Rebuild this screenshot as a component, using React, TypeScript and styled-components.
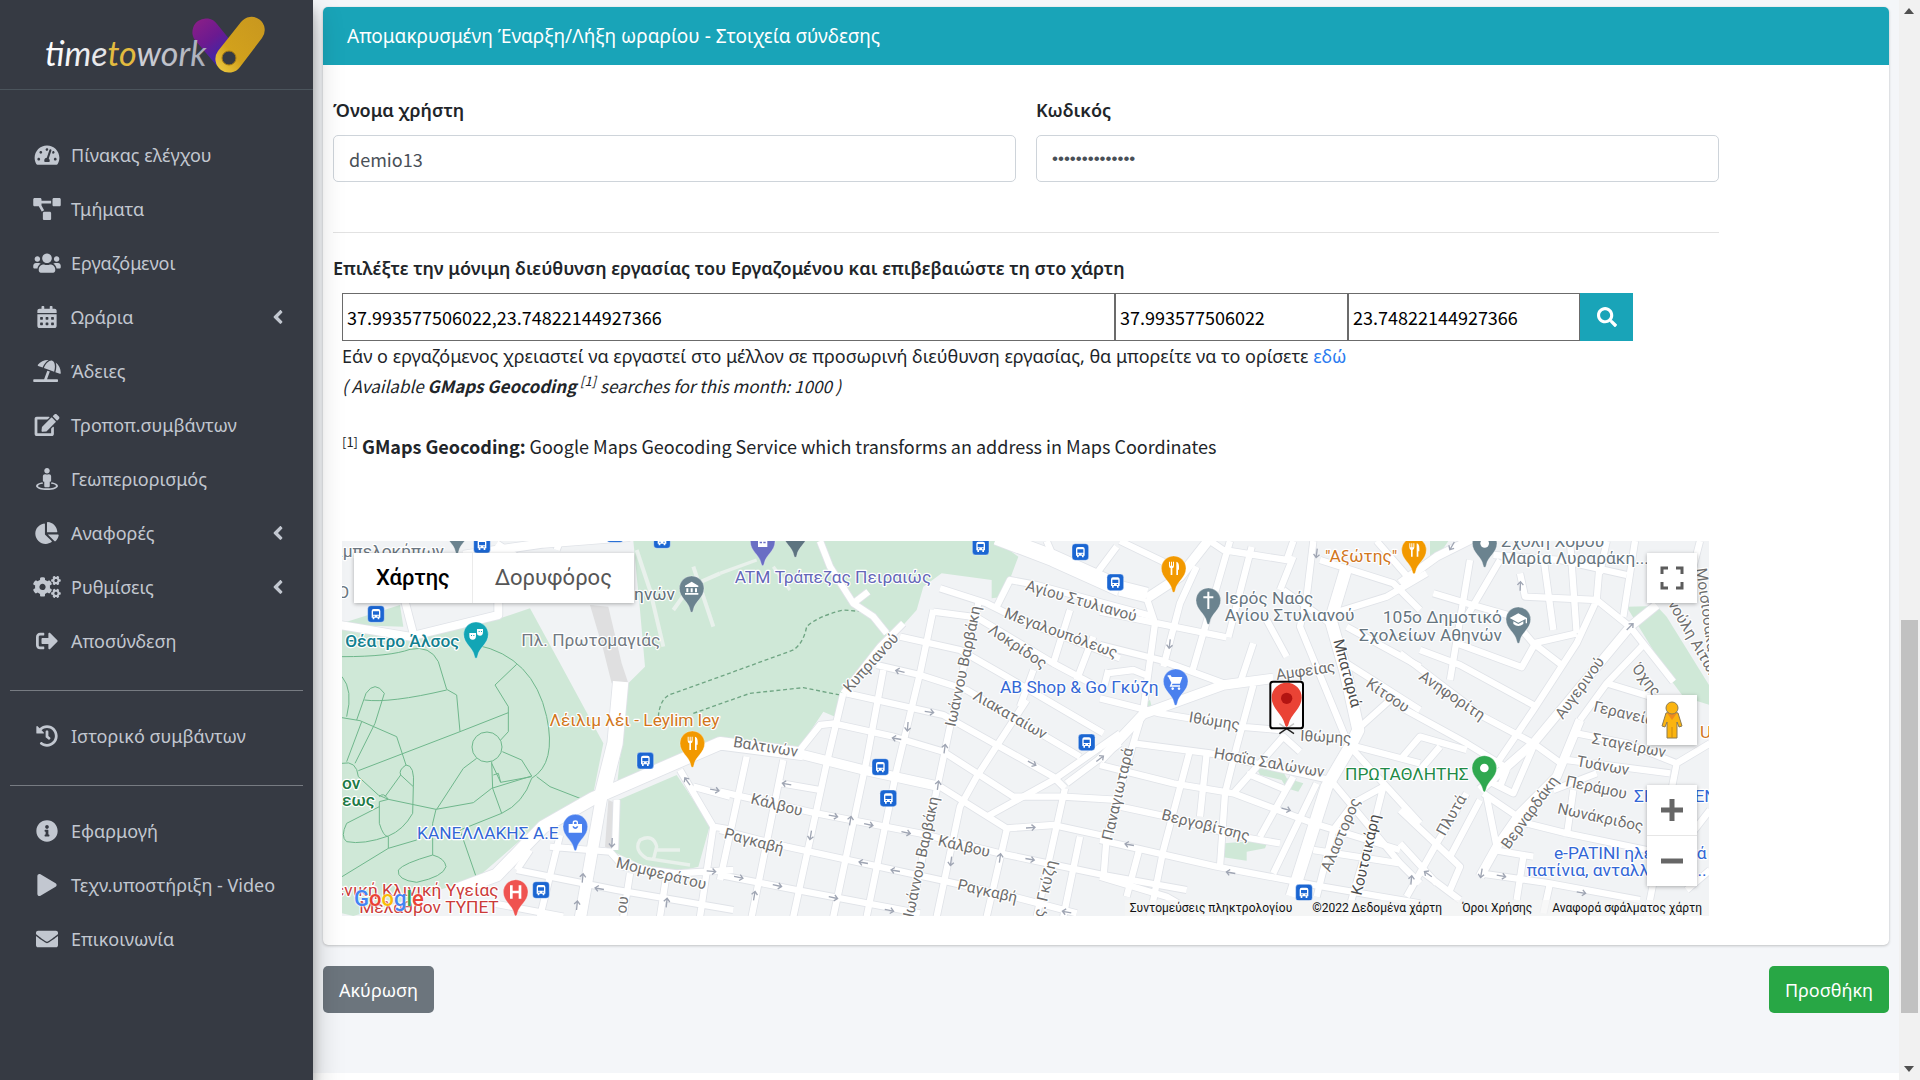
import React from 'react';
import styled, { createGlobalStyle, css } from 'styled-components';
import {
  FaTachometerAlt, FaProjectDiagram, FaUsers, FaCalendarAlt, FaUmbrellaBeach, FaEdit, FaStreetView,
  FaChartPie, FaCogs, FaSignOutAlt, FaHistory, FaInfoCircle, FaPlay, FaEnvelope, FaAngleLeft, FaSearch,
} from 'react-icons/fa';

const greek = '"Noto Sans", "Open Sans", sans-serif';
const latin = '"Noto Sans CJK JP", "Noto Sans", sans-serif';
const mapFont = 'Roboto, "Noto Sans", sans-serif';

const GlobalStyle = createGlobalStyle`
  *, *::before, *::after { box-sizing: border-box; }
  body { margin: 0; background: #fff; color: #212529; font: 18px/30px ${greek}; }
  a { color: #2a7bf0; text-decoration: none; }
  button, input { font: inherit; }
`;

/* ---------- page shell ---------- */
const Page = styled.div`
  display: flex;
  min-height: 100vh;
`;
const Sidebar = styled.aside`
  flex: 0 0 313px;
  background: #363a43;
  color: #c2c7d0;
  box-shadow: 0 14px 28px rgba(0, 0, 0, 0.25), 0 10px 10px rgba(0, 0, 0, 0.22);
  z-index: 2;
`;
const Brand = styled.a`
  display: block;
  height: 90px;
  border-bottom: 1px solid #4b545c;
  svg { display: block; }
`;
const Nav = styled.nav`
  padding: 40px 10px 0;
`;
const NavList = styled.ul`
  list-style: none;
  margin: 0;
  padding: 0;
  display: flex;
  flex-direction: column;
  gap: 4px;
`;
const Divider = styled.hr`
  height: 1px;
  margin: 24px 0 20px;
  border: 0;
  background: #777b82;
`;
const NavLink = styled.a`
  display: flex;
  align-items: center;
  gap: 8px;
  height: 50px;
  padding: 0 14px 0 21px;
  color: #c2c7d0;
`;
const NavIcon = styled.span`
  flex: 0 0 32px;
  display: flex;
  justify-content: center;
  svg { width: 28px; height: 22px; }
`;
const NavText = styled.span`
  flex: 1;
  white-space: nowrap;
`;
const Main = styled.main`
  flex: 1;
  min-width: 0;
  display: flex;
  flex-direction: column;
`;
const Content = styled.div`
  flex: 1;
  padding: 7px 10px 0;
  background: #f4f6f9;
`;
const Footer = styled.footer`
  height: 7px;
  background: #fff;
`;

/* ---------- scrollbar column ---------- */
const ScrollTrack = styled.div`
  flex: 0 0 21px;
  display: flex;
  flex-direction: column;
  align-items: center;
  background: #f1f1f1;
`;
const ScrollArrow = styled.svg`
  flex: 0 0 21px;
  width: 21px;
  fill: #505050;
`;
const ScrollThumb = styled.div`
  flex: 393;
  width: 17px;
  background: #c1c1c1;
`;
const ScrollGap = styled.div<{ $grow: number }>`
  flex: ${p => p.$grow};
`;

/* ---------- card and form ---------- */
const Card = styled.section`
  background: #fff;
  border-radius: 5px;
  box-shadow: 0 0 1px rgba(0, 0, 0, 0.13), 0 1px 3px rgba(0, 0, 0, 0.2);
`;
const CardHeader = styled.h3`
  margin: 0;
  padding: 14px 24px;
  border-radius: 5px 5px 0 0;
  background: #19a4b8;
  color: #fff;
  font-size: 19px;
  font-weight: 400;
  line-height: 30px;
`;
const CardBody = styled.form`
  padding: 30px 170px 29px 10px;
`;
const FieldRow = styled.div`
  display: grid;
  grid-template-columns: 1fr 1fr;
  gap: 20px;
`;
const Field = styled.div`
  display: flex;
  flex-direction: column;
  gap: 10px;
`;
const Label = styled.label`
  font-weight: 600;
  color: #212529;
`;
const TextInput = styled.input`
  height: 47px;
  padding: 0 15px;
  border: 1px solid #ced4da;
  border-radius: 5px;
  color: #495057;
  font-family: ${latin};
  &[type='password'] { font-family: 'Liberation Sans', sans-serif; font-size: 17px; }
`;
const Rule = styled.hr`
  height: 1px;
  margin: 50px 0 20px;
  border: 0;
  background: #e2e2e2;
`;
const Address = styled.div`
  padding: 10px 10px 0 9px;
`;
const SearchGroup = styled.div`
  display: grid;
  grid-template-columns: 773fr 233fr 232fr 53px;
  height: 48px;
  margin-right: 76px;
`;
const CoordInput = styled.input`
  min-width: 0;
  padding: 0 4px;
  border: 1px solid #6b6b6b;
  border-radius: 0;
  background: #fff;
  color: #000;
  font-family: ${latin};
`;
const SearchButton = styled.button`
  display: flex;
  align-items: center;
  justify-content: center;
  border: 0;
  background: #19a4b8;
  color: #fff;
  font-size: 20px;
`;
const Hint = styled.p<{ $gap?: boolean; $latin?: boolean; $italic?: boolean }>`
  margin: 0;
  ${p => p.$gap && css`margin-top: 30px;`}
  ${p => p.$latin && css`font-family: ${latin};`}
  ${p => p.$italic && css`font-size: 17px; font-style: italic;`}
  sup { font-size: 13px; line-height: 0; }
`;
const Actions = styled.div`
  display: flex;
  justify-content: space-between;
  margin-top: 21px;
`;
const ActionButton = styled.button<{ $color: string }>`
  height: 47px;
  padding: 0 16px;
  border: 0;
  border-radius: 5px;
  background: ${p => p.$color};
  color: #fff;
`;

/* ---------- map ---------- */
const MapBox = styled.div`
  position: relative;
  height: 375px;
  margin-top: 80px;
  overflow: hidden;
  background: #f1f3f4;
  font-family: ${mapFont};
`;
const MapCanvas = styled.svg`
  display: block;
  width: 100%;
  height: 100%;
  font-family: ${mapFont};
`;
const MapTypes = styled.div`
  position: absolute;
  top: 12px;
  left: 12px;
  display: flex;
  gap: 1px;
  background: #ebebeb;
  box-shadow: 0 1px 4px rgba(0, 0, 0, 0.3);
`;
const MapType = styled.button<{ $active?: boolean }>`
  height: 50px;
  padding: 0 22px;
  border: 0;
  background: #fff;
  color: ${p => (p.$active ? '#000' : '#565656')};
  font-size: 22px;
  font-weight: ${p => (p.$active ? 500 : 400)};
`;
const MapTools = styled.div`
  position: absolute;
  top: 12px;
  right: 12px;
  bottom: 30px;
  width: 50px;
  display: flex;
  flex-direction: column;
`;
const ToolGroup = styled.div<{ $top?: number }>`
  margin-top: ${p => p.$top ?? 0}px;
  display: flex;
  flex-direction: column;
  gap: 1px;
  background: #e6e6e6;
  box-shadow: 0 1px 4px rgba(0, 0, 0, 0.3);
`;
const Tool = styled.button`
  height: 50px;
  display: flex;
  align-items: center;
  justify-content: center;
  padding: 0;
  border: 0;
  background: #fff;
`;
const Attribution = styled.div`
  position: absolute;
  right: 0;
  bottom: 0;
  display: flex;
  gap: 20px;
  padding: 0 7px 0 5px;
  background: rgba(245, 245, 245, 0.7);
  font-size: 12px;
  line-height: 16px;
  white-space: nowrap;
  a, span { color: #111; }
`;
const GoogleMark = styled.a`
  position: absolute;
  left: 12px;
  bottom: 4px;
  font: 500 22px/26px ${mapFont};
  text-shadow: 0 0 2px #fff, 0 0 2px #fff;
`;
const Tint = styled.span<{ $c: string }>`
  color: ${p => p.$c};
`;
const Halo = styled.text`
  paint-order: stroke;
  stroke: #fff;
  stroke-width: 7px;
  stroke-linejoin: round;
`;

type Pt = [number, number];

/* The map is drawn in tiles; each tile lists its own parks, streets and labels. */
const A = 0, B = 1170, C = 2310, D = 3210;

const parks: [number, string][] = [
  [A, 'M36 285 L240 325 L520 262 L600 235 L690 400 L820 640 L790 790 L640 870 L440 1045 L200 1120 L70 1158 L36 1150Z'],
  [A, 'M36 280 L210 225 L220 290 L60 285Z'],
  [A, 'M910 33 H1300 V660 L1200 630 L1170 630 L860 775 L895 460 L945 410 L930 240Z'],
  [A, 'M865 810 L1040 735 L1140 885 L1105 1010 L1000 1035 L850 965Z'],
  [B, 'M0 33 H830 L895 80 L850 200 L815 205 L815 150 L665 130 L610 170 L590 240 L545 290 L480 350 L370 490 L345 560 L310 545 L240 650 L0 620Z'],
  [C, 'M470 715 L550 725 L560 745 L610 760 L595 785 L560 775 L545 750 L480 735Z'],
  [C, 'M372 940 L505 930 L495 955 L440 965 L440 992 L370 982Z'],
  [C, 'M115 530 L150 510 L155 530 L120 548Z'],
  [D, 'M680 230 L770 228 L800 260 L930 470 L930 525 L850 500 L820 460Z'],
  [D, 'M90 33 L145 33 L120 70 L90 90Z'],
];

const major: [number, number, string][] = [
  [A, 46, 'M872 455 L855 640 L815 800'],
  [A, 34, 'M815 800 L750 1170'],
  [A, 38, 'M380 1080 L500 1035 L640 890 L790 805 L1170 640 L1420 672'],
  [A, 24, 'M30 285 L240 320 L505 255 L505 215'],
  [A, 26, 'M400 75 L640 40 L900 20'],
  [A, 22, 'M225 215 L250 310'],
  [B, 48, 'M830 20 L1000 85 L1200 175'],
  [B, 28, 'M0 640 L240 672 L440 722 L660 770'],
  [C, 44, 'M60 175 L140 195'],
  [C, 28, 'M0 690 L130 552 L370 465 L520 445'],
  [C, 28, 'M140 205 L240 140 L330 25'],
  [C, 36, 'M740 110 L692 270 L735 420 L775 600 L750 650 L680 770 L575 1100'],
  [D, 26, 'M240 780 L400 640 L690 290 L770 225'],
  [D, 26, 'M240 1040 L290 950 L360 850 L470 740 L540 570'],
  [D, 24, 'M0 160 L110 80 L230 20'],
];

const streets: [number, string][] = [
  [A, 'M560 1020 L860 1080 L1210 1140 M690 915 L630 1160 M660 950 L840 965 L880 1010 L1040 1030 L1210 1020 M860 810 L855 960 M1050 720 L1150 890 L1110 1160 M1090 770 L1200 800 M1150 890 L1210 900 M600 960 L560 1020 M900 1030 L880 1160 M1010 1030 L990 1160 M490 1120 L700 1160 M500 40 L560 80 M690 33 L680 60'],
  [B, 'M0 785 L290 850 L600 910 L840 970 L1150 1035 L1400 1080 M0 900 L200 950 L660 1050 L880 1100 L1070 1150 M0 1035 L230 1080 L600 1150'],
  [B, 'M340 580 L520 620 L670 665 L880 800 L1030 800 M380 490 L670 555 L1000 740 L1035 775 M470 405 L600 435 L740 480 L1080 680 M540 320 L720 360 L860 440 L1150 610 M660 175 L800 220 L900 270 L1200 385'],
  [B, 'M185 760 L300 780 M80 680 L0 1050 M190 690 L95 1160 M370 490 L320 700 L220 1160 M490 420 L440 690 L340 1160 M640 240 L600 430 L530 720 L440 1160 M775 220 L690 590 L650 780 L570 1160 M920 510 L770 740 L720 830 L650 1160 M860 900 L800 1160 M1035 775 L985 1000 L950 1160 M1080 920 L1030 1160'],
  [B, 'M550 280 L480 350 L370 490 M240 660 L300 585 L345 580 M640 245 L770 262 L1000 400 L1150 480 M660 770 L860 895 L1000 885 L1160 920 M800 860 L1000 750 L1200 610 M1040 760 L1200 640 M830 230 L870 150 L950 165 L1300 260 M1190 50 L1130 130 M1120 320 L1070 450 M1165 420 L1150 480 M980 33 L1000 80 M940 420 L900 530 M1030 800 L1200 810 M1050 240 L1000 400 M900 800 L880 810'],
  [B, 'M300 33 L330 110 L400 220 L460 260 L500 310 M400 220 L445 185'],
  [C, 'M60 33 L200 100 L260 130 M140 205 L165 280 L130 540 L100 640 L20 920 L10 1050 M0 245 L380 322 M290 110 L240 220 L190 410 M390 33 L275 430 M455 50 L385 322 M330 33 L370 60 L560 90 L580 33 M0 345 L180 390 L370 460 M20 430 L100 420 L150 440'],
  [C, 'M0 505 L180 550 L420 590 L540 600 M100 640 L330 670 L690 750 M0 705 L220 760 L400 790 L640 880 L900 960 M0 930 L350 1010 L640 1065 L960 1120 M0 1040 L200 1100 L300 1158 M460 465 L410 650 L375 790 L360 1010 M270 660 L190 960 L150 1160 M320 670 L300 860 M400 790 L550 620 L600 665 M580 740 L480 920 M650 760 L520 1030 M440 730 L560 780'],
  [C, 'M640 33 L620 200 L600 290 L740 630 M500 270 L560 380 M460 340 L420 460 M580 80 L540 180 M660 90 L880 160 L960 240 M750 645 L960 700 M770 600 L870 510 M740 400 L960 540 M740 290 L960 410 M700 250 L860 200 L980 130 M850 770 L830 850 L740 1160 M850 770 L760 820 L700 900 L650 1100 M750 650 L960 880 M700 760 L900 1000 M640 960 L900 1000 L960 1060 M550 180 L690 280 M830 33 L940 160 M60 830 L200 860 L420 920 L540 940 M120 950 L80 1100'],
  [D, 'M0 530 L200 640 L330 720 M0 370 L250 560 L400 640 L490 705 M0 690 L60 620 L200 660 M170 340 L365 412 L400 350 M60 360 L180 405 L400 525 M210 90 L150 450 M100 190 L200 220 L340 260 M300 90 L200 260 M340 270 L400 340 L485 405 M400 340 L530 310 M360 130 L375 200 L590 210 L690 290 L820 455 M280 75 L480 90 L680 135 M600 90 L590 210 L530 340 L400 540 L250 760'],
  [D, 'M430 80 L460 300 M510 33 L530 310 M705 33 L670 260 M620 33 L600 130 M730 345 L620 460 L540 570 M620 460 L850 530 M530 610 L680 640 L830 700 L930 640 M500 690 L810 730 M460 780 L590 730 M520 780 L500 920 M830 700 L740 1160 M380 880 L500 910 L740 960 M280 960 L400 980 M240 1030 L450 1060 L720 1110 M370 980 L350 1110 M740 990 L860 930 L930 840 M860 1080 L930 1020 M900 33 L880 110 M290 950 L260 800'],
  [D, 'M200 790 L110 940 L20 1100 M250 790 L390 885 M240 810 L150 980 L180 1010 L150 1080 M0 840 L170 1000 M60 1020 L180 1110 M0 940 L110 1060 M400 650 L340 790 L240 740 M320 720 L300 770 M450 1060 L430 1150 M120 650 L60 720'],
];

const trails = 'M36 380 Q180 380 240 358 Q300 345 325 395 L350 478 L380 495 L390 605 L85 722 M36 563 L90 572 L200 620 L228 705 M103 510 Q180 520 350 480 M36 440 Q70 480 50 560 M80 570 L108 490 Q135 450 163 490 L135 580 L75 700 M95 575 L50 695 M36 700 Q80 690 85 740 L145 795 L175 808 L318 838 L430 818 L485 775 L605 738 L575 690 L517 665 M320 838 L400 715 L440 685 M485 695 L488 775 L515 850 M485 700 L512 757 L605 740 M490 735 L505 730 L512 757 M440 345 Q610 380 650 560 Q680 700 605 745 Q580 820 515 850 L390 900 L440 1045 M560 403 L495 465 L535 530 L535 605 L512 630 M390 605 L535 548 M620 740 L660 770 L750 805 M148 800 Q160 785 175 808 L148 815 L148 880 Q160 920 175 920 L175 955 L36 1040 M228 705 Q255 705 250 770 L248 850 Q220 900 175 918 Q100 945 50 935 Q30 920 50 880 L148 830 M228 705 Q205 720 212 735 L250 770 M212 735 L165 800 M318 838 L308 880 L308 975 Q345 985 348 1010 Q340 1040 260 1057 Q200 1050 205 1020 Q220 1000 308 975 M175 955 L260 930';

interface StreetName { t: string; p: Pt; r?: number; dark?: boolean }
const names: StreetName[] = [
  { t: 'Μομφεράτου', p: [A + 856, 1012], r: 14 },
  { t: 'ου', p: [A + 888, 1152], r: -82 },
  { t: 'Βαλτινών', p: [B + 38, 650], r: 9 },
  { t: 'Κάλβου', p: [B + 90, 820], r: 14 },
  { t: 'Ραγκαβή', p: [B + 10, 924], r: 15 },
  { t: 'Κάλβου', p: [B + 652, 946], r: 13 },
  { t: 'Ραγκαβή', p: [B + 710, 1078], r: 13 },
  { t: 'Κυπριανού', p: [B + 390, 490], r: -48 },
  { t: 'Ιωάννου Βαρβάκη', p: [B + 706, 592], r: -78 },
  { t: 'Ιωάννου Βαρβάκη', p: [B + 580, 1164], r: -78 },
  { t: 'Αγίου Στυλιανού', p: [B + 914, 180], r: 16 },
  { t: 'Μεγαλουπόλεως', p: [B + 850, 262], r: 20 },
  { t: 'Λοκρίδος', p: [B + 802, 306], r: 34 },
  { t: 'Λιακαταίων', p: [B + 756, 506], r: 30 },
  { t: 'ς. Γκύζη', p: [B + 970, 1164], r: -77 },
  { t: 'Παναγιωταρά', p: [C + 36, 934], r: -77 },
  { t: 'Ιθώμης', p: [C + 265, 576], r: 9 },
  { t: 'Ιθώμης', p: [C + 600, 632], r: 3 },
  { t: 'Αμφείας', p: [C + 530, 450], r: -8 },
  { t: 'Ησαΐα Σαλώνων', p: [C + 340, 684], r: 10 },
  { t: 'Βεργοβίτσης', p: [C + 182, 868], r: 14 },
  { t: 'Μπαταριά', p: [C + 700, 332], r: 75, dark: true },
  { t: 'Κίτσου', p: [C + 795, 468], r: 34 },
  { t: 'Αλαστορος', p: [C + 690, 1028], r: -67 },
  { t: 'Κουτσικάρη', p: [C + 784, 1098], r: -77, dark: true },
  { t: 'Ανηφορίτη', p: [D + 54, 446], r: 34 },
  { t: 'Αυγερινού', p: [D + 488, 570], r: -54 },
  { t: 'Βερναρδάκη', p: [D + 326, 960], r: -54 },
  { t: 'Πλυτά', p: [D + 134, 920], r: -60 },
  { t: 'Γερανείων', p: [D + 578, 544], r: 13 },
  { t: 'Σταγείρων', p: [D + 574, 640], r: 11 },
  { t: 'Τυάνων', p: [D + 528, 708], r: 10 },
  { t: 'Περάμου', p: [D + 494, 768], r: 12 },
  { t: 'Νωνάκριδος', p: [D + 470, 850], r: 12 },
  { t: 'Όχης', p: [D + 694, 416], r: 52 },
  { t: 'Γιαννούλη Αιτωλού', p: [D + 762, 150], r: 60 },
  { t: 'Μοισιόδακα', p: [D + 888, 116], r: 82 },
];

interface Place { t: string[]; p: Pt; c: string; end?: boolean; bold?: boolean }
const places: Place[] = [
  { t: ['Αμπελοκήπων'], p: [A + 4, 80], c: '#6b7680' },
  { t: ['Ο'], p: [A + 22, 205], c: '#6b7680' },
  { t: ['Πεδίον Αθηνών'], p: [A + 1035, 210], c: '#5f6f78', end: true },
  { t: ['Θέατρο Άλσος'], p: [A + 388, 350], c: '#12808f', end: true, bold: true },
  { t: ['Πλ. Πρωτομαγιάς'], p: [A + 574, 348], c: '#727a82' },
  { t: ['Λέιλιμ λέι - Leylim ley'], p: [A + 1168, 588], c: '#d1761c', end: true },
  { t: ['ΚΑΝΕΛΛΑΚΗΣ Α.Ε'], p: [A + 686, 928], c: '#3367d6', end: true },
  { t: ['ον', 'εως'], p: [A + 36, 776], c: '#1d7a46', bold: true },
  { t: ['Γενική Κλινική Υγείας', 'Μέλαθρον ΤΥΠΕΤ'], p: [A + 506, 1098], c: '#cb3a38', end: true },
  { t: ['ATM Τράπεζας Πειραιώς'], p: [B + 44, 160], c: '#6467b8' },
  { t: ['AB Shop & Go Γκύζη'], p: [C + 176, 488], c: '#3367d6', end: true },
  { t: ['Ιερός Ναός', 'Αγίου Στυλιανού'], p: [C + 374, 222], c: '#66757f' },
  { t: ['"Αξώτης"'], p: [C + 892, 96], c: '#d1761c', end: true },
  { t: ['105ο Δημοτικό', 'Σχολείων Αθηνών'], p: [D + 306, 280], c: '#66757f', end: true },
  { t: ['Σχολή Χορού', 'Μαρία Λυραράκη...'], p: [D + 304, 50], c: '#66757f' },
  { t: ['ΠΡΩΤΑΘΛΗΤΗΣ'], p: [D + 206, 750], c: '#218a47', end: true },
  { t: ['e-PATINI ηλεκτρικά', 'πατίνια, ανταλλακτικ...'], p: [D + 920, 986], c: '#3367d6', end: true },
  { t: ['ΣΕΡΒΙΣ ΕΝ'], p: [D + 702, 815], c: '#3367d6' },
  { t: ['U'], p: [D + 900, 624], c: '#d1761c' },
];

const stops: Pt[] = [
  [A + 138, 252], [A + 456, 44], [A + 855, 12], [A + 996, 30], [A + 946, 692], [A + 633, 1080],
  [B + 782, 50], [B + 1081, 66], [B + 1186, 157], [B + 1100, 637], [B + 481, 711], [B + 505, 805],
  [C + 612, 1088],
];

const arrows: [number, number, number][] = [
  [B + 540, 424, 193], [B + 628, 546, 8], [B + 563, 590, 95], [B + 530, 626, 190], [B + 936, 700, 28],
  [B + 674, 656, -82], [B + 654, 766, -82], [B + 200, 762, 190], [B + 340, 858, 10], [B + 446, 884, 12],
  [B + 391, 872, -80], [B + 558, 908, 12], [B + 272, 916, 100], [B + 932, 893, -4], [B + 930, 988, 10],
  [B + 840, 984, -82], [B + 693, 994, 98], [B + 430, 998, 190], [B + 526, 1022, 190], [B + 56, 1042, 12],
  [B + 172, 1067, 12], [B + 340, 1103, 12], [B + 508, 1141, 12], [B + 103, 1097, -80], [B + 1040, 1146, 190],
  [B + 1140, 686, -38], [A + 1072, 754, 235], [A + 1154, 780, 10], [A + 846, 938, 93], [A + 808, 1076, 190],
  [A + 1010, 1118, -84], [A + 758, 1044, -84], [A + 741, 1126, -84], [A + 1144, 1024, 5],
  [C + 209, 342, 97], [C + 650, 70, 97], [C + 88, 944, 190], [C + 392, 1028, 190], [C + 558, 838, 15],
  [C + 934, 1050, -84], [D + 361, 168, -88], [D + 690, 290, -45], [D + 156, 48, 120], [D + 244, 1030, 100],
  [D + 304, 1038, 10], [D + 544, 1088, 10], [D + 84, 1032, 215],
];

const glyphs: Record<string, React.ReactNode> = {
  fork: <path d="M-14-20v12q0 7 5 8v20h5v-20q5-1 5-8v-12h-3v12h-3v-12h-3v12h-3v-12zM8 20v-40q8 2 8 14v10h-3v16z" fill="#fff" />,
  museum: <path d="M-20-8L0-20 20-8v4h-40zM-16 0h6v12h-6zm13 0h6v12h-6zm13 0h6v12h-6zM-20 14h40v5h-40z" fill="#fff" />,
  masks: <path d="M-20-4h20v8q0 12-10 12t-10-12zM3-16h18v8q0 12-9 12t-9-8zM-15 2h3v3h-3zm7 0h3v3h-3zM8-10h3v3H8zm7 0h3v3h-3z" fill="#fff" fillRule="evenodd" />,
  bag: <path d="M-20-8h40v26h-40zM-8-8v-4q0-7 8-7t8 7v4h-4v-4q0-3-4-3t-4 3v4zM-9 0q9 14 18 0l-4-2q-5 8-10 0z" fill="#fff" fillRule="evenodd" />,
  hospital: <path d="M-17-20h8v16H9v-16h8v40H9V4H-9v16h-8z" fill="#fff" />,
  bank: <path d="M-14-16h28v32h-28zM-9-10v5h7v-5zm11 0v5h7v-5zM-9 0v5h7V0zM2 0v5h7V0z" fill="#fff" fillRule="evenodd" />,
  cart: <path d="M-24-18h9l3 5h32l-7 20h-22l-3 5h25v4h-31l5-12-9-18h-2zM-9 18a4 4 0 1 0 .1 0zM10 18a4 4 0 1 0 .1 0z" fill="#fff" />,
  cross: <path d="M-3-26h6v14h12v6H3v32h-6V-6h-12v-6h12z" fill="#fff" />,
  school: <path d="M-26-4L0-18 26-4v16h-4V-1L0 10zM-15 6L0 14 15 6v8Q0 26-15 14z" fill="#fff" />,
  dot: <circle r="13" fill="#fff" />,
};
const pins: [number, number, string, string][] = [
  [A + 1085, 175, '#6b838f', 'museum'], [A + 438, 313, '#12a5b5', 'masks'], [A + 1087, 640, '#f29900', 'fork'],
  [A + 736, 890, '#4a80ee', 'bag'], [A + 557, 1086, '#ef5350', 'hospital'], [A + 381, 0, '#6b838f', 'dot'],
  [B + 128, 35, '#6a6ec4', 'bank'], [B + 226, 10, '#5d7480', 'dot'], [C + 221, 115, '#f29900', 'fork'],
  [C + 325, 211, '#6b838f', 'cross'], [C + 227, 454, '#4a80ee', 'cart'], [D + 42, 60, '#f29900', 'fork'],
  [D + 254, 40, '#6b838f', 'dot'], [D + 355, 268, '#6b838f', 'school'], [D + 253, 714, '#2fa84f', 'dot'],
];

const Pin = ({ x, y, color, icon }: { x: number; y: number; color: string; icon: string }) => (
  <g transform={`translate(${x} ${y})`}>
    <path d="M0 72Q-4 72-5 64C-9 40-37 28-37 0A37 37 0 0 1 37 0C37 28 9 40 5 64Q4 72 0 72Z" fill={color} stroke="#fff" strokeOpacity="0.5" strokeWidth="2" />
    {glyphs[icon]}
  </g>
);
const BusStop = ({ x, y }: { x: number; y: number }) => (
  <g transform={`translate(${x} ${y})`}>
    <rect x="-25" y="-25" width="50" height="50" rx="10" fill="#1b66d2" stroke="#fff" strokeOpacity="0.6" strokeWidth="2" />
    <path d="M-13-9q0-6 6-6H7q6 0 6 6V11h-3v5H5v-5H-5v5h-5v-5h-3zM-9-8V2H9V-8zM-8 5v3h4V5zM4 5v3h4V5z" fill="#fff" fillRule="evenodd" />
  </g>
);

const MapDrawing = () => (
  <MapCanvas viewBox="36 33 4101 1125" preserveAspectRatio="xMidYMid slice" role="img" aria-label="Χάρτης">
    <rect x="-500" y="-500" width="5200" height="2200" fill="#f1f3f5" />
    {parks.map(([x, d], i) => <path key={i} d={d} transform={`translate(${x} 0)`} fill="#cfe8d7" />)}
    <path d="M780 225L820 360 845 460H895L875 400 835 230ZM835 810L825 950 850 965 858 820Z" fill="#dfdfe0" />
    <path d="M1000 350L960 180 920 60M1090 110L1150 290M1170 130L1080 170 1030 240" fill="none" stroke="#e9f1ec" strokeWidth="12" />
    <path d="M1170 130L1280 90M1330 110L1380 180M1080 1005L950 985Q910 960 930 930 970 910 980 950L970 990M980 960H1050" fill="none" stroke="#e9f1ec" strokeWidth="10" />
    <path d={trails} fill="none" stroke="#6fb78c" strokeWidth="3" />
    <circle cx="471" cy="651" r="45" fill="none" stroke="#6fb78c" strokeWidth="3" />
    <path d="M985 560Q990 500 1030 490L1170 440 1390 360Q1420 340 1430 290 1460 260 1540 240L1600 245M1090 550L1260 490 1420 473 1530 495" fill="none" stroke="#6fa583" strokeWidth="4" strokeDasharray="12 8" />
    <g fill="none" strokeLinejoin="round" stroke="#e0e3e8">
      {streets.map(([x, d], i) => <path key={i} d={d} transform={`translate(${x} 0)`} strokeWidth="24" />)}
      {major.map(([x, w, d], i) => <path key={i} d={d} transform={`translate(${x} 0)`} strokeWidth={w + 5} />)}
    </g>
    <g fill="none" strokeLinejoin="round" stroke="#fff">
      {streets.map(([x, d], i) => <path key={i} d={d} transform={`translate(${x} 0)`} strokeWidth="19" />)}
      {major.map(([x, w, d], i) => <path key={i} d={d} transform={`translate(${x} 0)`} strokeWidth={w} />)}
    </g>
    {arrows.map(([x, y, r], i) => (
      <path key={i} transform={`translate(${x} ${y}) rotate(${r})`} d="M-14 0H12M3-9L13 0 3 9" fill="none" stroke="#9fa5b3" strokeWidth="4" />
    ))}
    {names.map(({ t, p, r = 0, dark }, i) => (
      <Halo key={i} transform={`translate(${p[0]} ${p[1]}) rotate(${r})`} fontSize="46" fill={dark ? '#4b4b4b' : '#6e6e6e'}>{t}</Halo>
    ))}
    {stops.map(([x, y], i) => <BusStop key={i} x={x} y={y} />)}
    {places.map(({ t, p, c, end, bold }, i) =>
      t.map((line, k) => (
        <Halo key={`${i}-${k}`} x={p[0]} y={p[1] + k * 52} fontSize="52" fontWeight={bold ? 500 : 400} textAnchor={end ? 'end' : 'start'} fill={c}>{line}</Halo>
      )))}
    {pins.map(([x, y, c, g], i) => <Pin key={i} x={x} y={y} color={c} icon={g} />)}
    <g transform="translate(2870 523)">
      <path d="M-22 88L22 58M-22 58L22 88" stroke="#222" strokeWidth="4" />
      <rect x="-49" y="-68" width="98" height="140" rx="8" fill="#fff" fillOpacity="0.75" stroke="#000" strokeWidth="6" />
      <path d="M0 68Q-4 68-6 58C-12 30-45 12-45-20A45 45 0 0 1 45-20C45 12 12 30 6 58Q4 68 0 68Z" fill="#ea4335" />
      <circle cy="-18" r="17" fill="#b31412" />
    </g>
  </MapCanvas>
);

const Logo = () => (
  <svg width="313" height="89" viewBox="0 0 313 89" role="img" aria-label="timetowork">
    <defs>
      <linearGradient id="gold" x1="0" y1="1" x2="1" y2="0">
        <stop offset="0" stopColor="#f0cf45" /><stop offset="0.35" stopColor="#d2a11c" /><stop offset="1" stopColor="#c8971f" />
      </linearGradient>
      <linearGradient id="violet" x1="0" y1="0" x2="0.7" y2="1">
        <stop offset="0" stopColor="#8e1f86" /><stop offset="0.5" stopColor="#6b1a90" /><stop offset="1" stopColor="#2f2bb0" />
      </linearGradient>
      <linearGradient id="silver" x1="0" y1="0" x2="1" y2="0">
        <stop offset="0" stopColor="#fff" /><stop offset="0.3" stopColor="#e9e9ea" /><stop offset="1" stopColor="#a9adb8" />
      </linearGradient>
    </defs>
    <path d="M195 40A13 13 0 0 1 217 24L234 45 217 66Z" fill="url(#violet)" />
    <text x="45" y="66" fontFamily="Lato, sans-serif" fontStyle="italic" fontSize="34" fontWeight="400" fill="url(#silver)">
      time<tspan fill="#e3bb3f">to</tspan>work
    </text>
    <path d="M218 51L241 22A13 13 0 0 1 262 38L240 67A13 13 0 0 1 218 51Z" fill="url(#gold)" />
    <circle cx="229" cy="58" r="7" fill="#363a43" stroke="#a87c12" strokeWidth="1" />
  </svg>
);

const Pegman = () => (
  <svg width="24" height="38" viewBox="0 0 24 38">
    <path d="M6 12Q12 10 18 12L22 25 19 26 17 21V37H7V21L5 26 2 25Z" fill="#fbb40f" stroke="#8a7b55" strokeWidth="1" />
    <path d="M7 12H17L12 19Z" fill="#ee8a1d" />
    <path d="M12 26V37" stroke="#c98a10" />
    <circle cx="12" cy="7" r="6" fill="#fbb40f" stroke="#8a7b55" strokeWidth="1" />
  </svg>
);

interface Item { text: string; icon: React.ReactNode; more?: boolean }
const groups: Item[][] = [
  [
    { text: 'Πίνακας ελέγχου', icon: <FaTachometerAlt /> },
    { text: 'Τμήματα', icon: <FaProjectDiagram /> },
    { text: 'Εργαζόμενοι', icon: <FaUsers /> },
    { text: 'Ωράρια', icon: <FaCalendarAlt />, more: true },
    { text: 'Άδειες', icon: <FaUmbrellaBeach /> },
    { text: 'Τροποπ.συμβάντων', icon: <FaEdit /> },
    { text: 'Γεωπεριορισμός', icon: <FaStreetView /> },
    { text: 'Αναφορές', icon: <FaChartPie />, more: true },
    { text: 'Ρυθμίσεις', icon: <FaCogs />, more: true },
    { text: 'Αποσύνδεση', icon: <FaSignOutAlt /> },
  ],
  [{ text: 'Ιστορικό συμβάντων', icon: <FaHistory /> }],
  [
    { text: 'Εφαρμογή', icon: <FaInfoCircle /> },
    { text: 'Τεχν.υποστήριξη - Video', icon: <FaPlay /> },
    { text: 'Επικοινωνία', icon: <FaEnvelope /> },
  ],
];

export default function App() {
  return (
    <Page>
      <GlobalStyle />
      <Sidebar>
        <Brand href="#"><Logo /></Brand>
        <Nav>
          {groups.map((items, g) => (
            <React.Fragment key={g}>
              {g > 0 && <Divider />}
              <NavList>
                {items.map(({ text, icon, more }) => (
                  <li key={text}>
                    <NavLink href="#">
                      <NavIcon>{icon}</NavIcon>
                      <NavText>{text}</NavText>
                      {more && <FaAngleLeft size={22} />}
                    </NavLink>
                  </li>
                ))}
              </NavList>
            </React.Fragment>
          ))}
        </Nav>
      </Sidebar>

      <Main>
        <Content>
          <Card>
            <CardHeader>Απομακρυσμένη Έναρξη/Λήξη ωραρίου - Στοιχεία σύνδεσης</CardHeader>
            <CardBody id="details" onSubmit={e => e.preventDefault()}>
              <FieldRow>
                <Field>
                  <Label htmlFor="user">Όνομα χρήστη</Label>
                  <TextInput id="user" defaultValue="demio13" />
                </Field>
                <Field>
                  <Label htmlFor="pass">Κωδικός</Label>
                  <TextInput id="pass" type="password" defaultValue="12345678901234" />
                </Field>
              </FieldRow>
              <Rule />
              <Label htmlFor="address">Επιλέξτε την μόνιμη διεύθυνση εργασίας του Εργαζομένου και επιβεβαιώστε τη στο χάρτη</Label>
              <Address>
                <SearchGroup>
                  <CoordInput id="address" defaultValue="37.993577506022,23.74822144927366" />
                  <CoordInput aria-label="Latitude" defaultValue="37.993577506022" />
                  <CoordInput aria-label="Longitude" defaultValue="23.74822144927366" />
                  <SearchButton type="button" aria-label="Search"><FaSearch /></SearchButton>
                </SearchGroup>
                <Hint>Εάν ο εργαζόμενος χρειαστεί να εργαστεί στο μέλλον σε προσωρινή διεύθυνση εργασίας, θα μπορείτε να το ορίσετε <a href="#">εδώ</a></Hint>
                <Hint $latin $italic>( Available <b>GMaps Geocoding</b> <sup>[1]</sup> searches for this month: 1000 )</Hint>
                <Hint $latin $gap><sup>[1]</sup> <b>GMaps Geocoding:</b> Google Maps Geocoding Service which transforms an address in Maps Coordinates</Hint>
                <MapBox>
                  <MapDrawing />
                  <MapTypes>
                    <MapType type="button" $active>Χάρτης</MapType>
                    <MapType type="button">Δορυφόρος</MapType>
                  </MapTypes>
                  <MapTools>
                    <ToolGroup>
                      <Tool type="button" aria-label="Fullscreen">
                        <svg width="24" height="24" viewBox="0 0 24 24" fill="none" stroke="#5c5c5c" strokeWidth="3">
                          <path d="M2 8V2H8M16 2H22V8M22 16V22H16M8 22H2V16" />
                        </svg>
                      </Tool>
                    </ToolGroup>
                    <ToolGroup $top={92}>
                      <Tool type="button" aria-label="Street View"><Pegman /></Tool>
                    </ToolGroup>
                    <ToolGroup $top={40}>
                      <Tool type="button" aria-label="Zoom in">
                        <svg width="22" height="22" viewBox="0 0 22 22" stroke="#666" strokeWidth="5"><path d="M0 11H22M11 0V22" /></svg>
                      </Tool>
                      <Tool type="button" aria-label="Zoom out">
                        <svg width="22" height="22" viewBox="0 0 22 22" stroke="#666" strokeWidth="5"><path d="M0 11H22" /></svg>
                      </Tool>
                    </ToolGroup>
                  </MapTools>
                  <GoogleMark href="#">
                    <Tint $c="#4285f4">G</Tint><Tint $c="#ea4335">o</Tint><Tint $c="#fbbc04">o</Tint><Tint $c="#4285f4">g</Tint><Tint $c="#34a853">l</Tint><Tint $c="#ea4335">e</Tint>
                  </GoogleMark>
                  <Attribution>
                    <a href="#">Συντομεύσεις πληκτρολογίου</a>
                    <span>©2022 Δεδομένα χάρτη</span>
                    <a href="#">Όροι Χρήσης</a>
                    <a href="#">Αναφορά σφάλματος χάρτη</a>
                  </Attribution>
                </MapBox>
              </Address>
            </CardBody>
          </Card>
          <Actions>
            <ActionButton type="button" $color="#6c757d">Ακύρωση</ActionButton>
            <ActionButton type="submit" form="details" $color="#28a745">Προσθήκη</ActionButton>
          </Actions>
        </Content>
        <Footer />
      </Main>

      <ScrollTrack aria-hidden="true">
        <ScrollArrow viewBox="0 0 21 21"><path d="M5 14L10 8 15 14Z" /></ScrollArrow>
        <ScrollGap $grow={599} />
        <ScrollThumb />
        <ScrollGap $grow={46} />
        <ScrollArrow viewBox="0 0 21 21"><path d="M5 7L10 13 15 7Z" /></ScrollArrow>
      </ScrollTrack>
    </Page>
  );
}
